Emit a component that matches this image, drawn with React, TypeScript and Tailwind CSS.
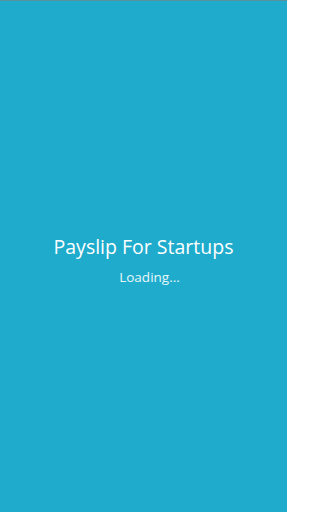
export default function App() {
  return (
    <div
      className="flex h-[512px] w-[287px] flex-col items-center justify-center border-t border-[#5a8f9e] bg-[#1eabcc] pt-[6px] text-white"
      style={{ fontFamily: '"Open Sans", "Noto Sans", sans-serif' }}
    >
      <h1 className="text-[19.5px] leading-[26px]">Payslip For Startups</h1>
      <p className="ml-[12px] mt-[8px] text-[13.5px] leading-[18px] text-white/90">Loading...</p>
    </div>
  );
}
